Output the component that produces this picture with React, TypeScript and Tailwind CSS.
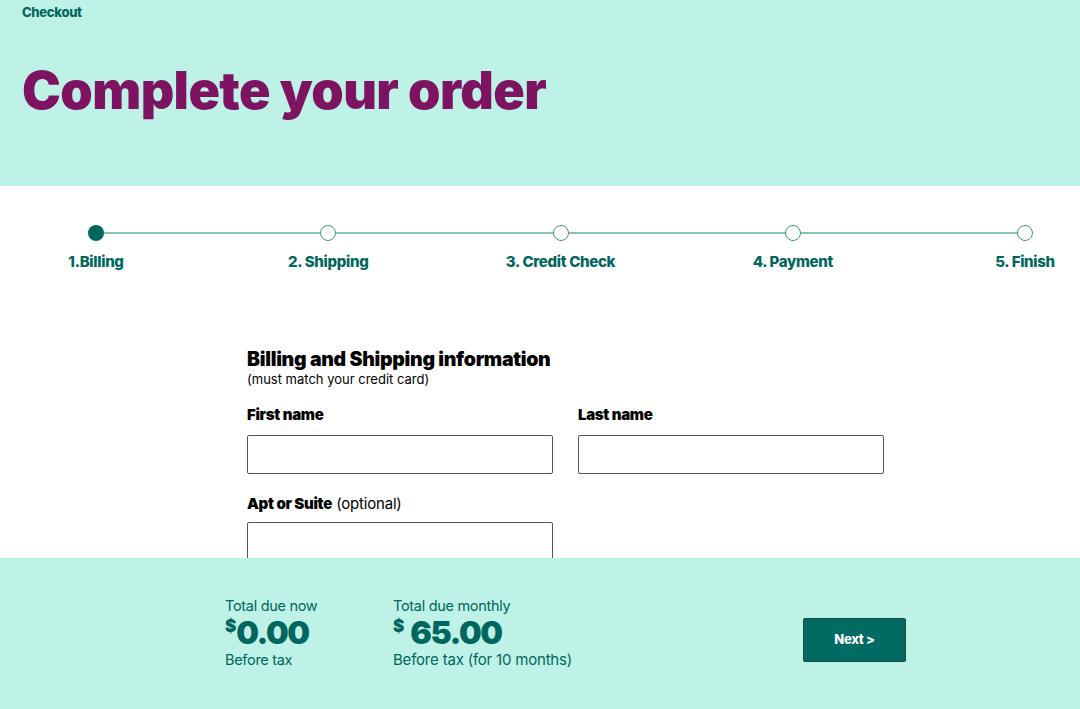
import React from "react";

const steps = ["1.Billing", "2. Shipping", "3. Credit Check", "4. Payment", "5. Finish"];

export default function App() {
  return (
    <div
      className="flex h-[709px] w-[1080px] flex-col overflow-hidden bg-white"
      style={{ fontFamily: "Inter, 'Noto Sans', sans-serif" }}
    >
      <header className="h-[186px] shrink-0 bg-[#bef2e6] px-[22px] pt-[3px]">
        <div className="text-[13px] font-extrabold tracking-[-0.3px] text-[#00665e]">Checkout</div>
        <h1 className="mt-[42px] text-[52px] font-black leading-none tracking-[-0.6px] text-[#7d1361]">
          Complete your order
        </h1>
      </header>

      <main className="flex-1 overflow-hidden">
        <div className="relative ml-[88px] mt-[39px] w-[945px]">
          <div className="absolute left-[8px] right-[8px] top-[7px] h-[2px] bg-[#86c2bc]" />
          <div className="relative flex justify-between">
            {steps.map((s, i) => (
              <div key={s} className="flex w-4 flex-col items-center">
                <div
                  className={
                    i === 0
                      ? "h-4 w-4 rounded-full bg-[#00665e]"
                      : "h-4 w-4 rounded-full border-[1.5px] border-[#3f948c] bg-white"
                  }
                />
                <div className="mt-[10px] whitespace-nowrap text-[15px] font-extrabold tracking-[-0.3px] text-[#00665e]">
                  {s}
                </div>
              </div>
            ))}
          </div>
        </div>

        <section className="ml-[247px] mt-[73px] w-[637px]">
          <h2 className="text-[19.5px] font-black leading-tight tracking-[-0.3px] text-black">
            Billing and Shipping information
          </h2>
          <p className="text-[13px] leading-tight text-black">(must match your credit card)</p>

          <div className="mt-[18px] grid grid-cols-2 gap-x-[25px]">
            <div>
              <label className="block text-[15px] font-black leading-[20px] tracking-[-0.3px] text-black">First name</label>
              <div className="mt-[10px] h-[39px] w-[306px] rounded-[2px] border border-[#555]" />
            </div>
            <div>
              <label className="block text-[15px] font-black leading-[20px] tracking-[-0.3px] text-black">Last name</label>
              <div className="mt-[10px] h-[39px] w-[306px] rounded-[2px] border border-[#555]" />
            </div>
          </div>

          <div className="mt-[20px]">
            <label className="block text-[15px] leading-[20px] text-black">
              <span className="font-black tracking-[-0.3px]">Apt or Suite</span>{" "}
              <span className="tracking-[-0.2px]">(optional)</span>
            </label>
            <div className="mt-[8px] h-[39px] w-[306px] rounded-[2px] border border-[#555]" />
          </div>
        </section>
      </main>

      <footer className="flex h-[151px] shrink-0 items-start bg-[#bef2e6] text-[#00665e]">
        <div className="ml-[225px] mt-[39px] w-[168px]">
          <div className="text-[14.5px] leading-[18px] tracking-[-0.3px]">Total due now</div>
          <div className="mt-[1px] flex items-start font-black leading-[34px]">
            <span className="text-[17px] leading-[20px]">$</span>
            <span className="text-[32px] tracking-[-1.5px]">0.00</span>
          </div>
          <div className="mt-[1px] text-[14.5px] leading-[18px] tracking-[-0.3px]">Before tax</div>
        </div>
        <div className="mt-[39px] w-[410px]">
          <div className="text-[14.5px] leading-[18px] tracking-[-0.3px]">Total due monthly</div>
          <div className="mt-[1px] flex items-start font-black leading-[34px]">
            <span className="text-[17px] leading-[20px]">$</span>
            <span className="ml-[6px] text-[32px] tracking-[-1.5px]">65.00</span>
          </div>
          <div className="mt-[1px] text-[15px] leading-[18px] tracking-[-0.2px]">Before tax (for 10 months)</div>
        </div>
        <button className="mt-[60px] h-[44px] w-[103px] rounded-[2px] border border-[#1c4a44] bg-[#006b63] text-[13px] font-extrabold tracking-[-0.3px] text-white">
          Next &gt;
        </button>
      </footer>
    </div>
  );
}
